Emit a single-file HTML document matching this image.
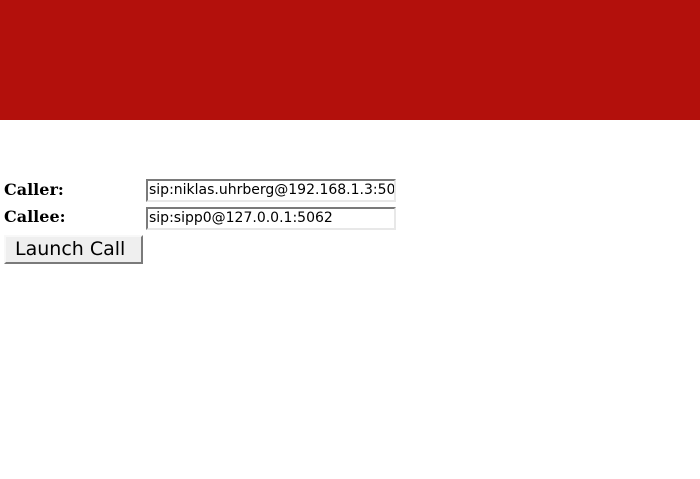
<!DOCTYPE html>
<html><head><style>
body{margin:0;width:700px;height:479px;background:#fff;overflow:hidden;font-family:"DejaVu Serif","Liberation Serif",serif;}
.hdr{height:120px;background:#b3100c;}
.row{position:absolute;left:4px;font-size:16px;font-weight:bold;color:#000;}
.inp{position:absolute;left:146px;width:250px;height:23px;border:2px solid;border-color:#7a7a7a #e8e8e8 #e8e8e8 #7a7a7a;box-sizing:border-box;background:#fff;font-family:"DejaVu Sans",sans-serif;font-size:14px;line-height:19px;padding-left:1px;white-space:nowrap;overflow:hidden;color:#000;}
.btn{position:absolute;left:4px;top:235px;width:139px;height:29px;box-sizing:border-box;background:#efefef;border:2px solid;border-color:#f8f8f8 #7a7a7a #7a7a7a #f8f8f8;font-family:"DejaVu Sans",sans-serif;font-size:19px;line-height:25px;padding-left:9px;color:#000;}
</style></head><body>
<div class="hdr"></div>
<div class="row" style="top:180px">Caller:</div>
<div class="inp" style="top:179px">sip:niklas.uhrberg@192.168.1.3:5060</div>
<div class="row" style="top:207px">Callee:</div>
<div class="inp" style="top:207px">sip:sipp0@127.0.0.1:5062</div>
<div class="btn">Launch Call</div>
</body></html>
